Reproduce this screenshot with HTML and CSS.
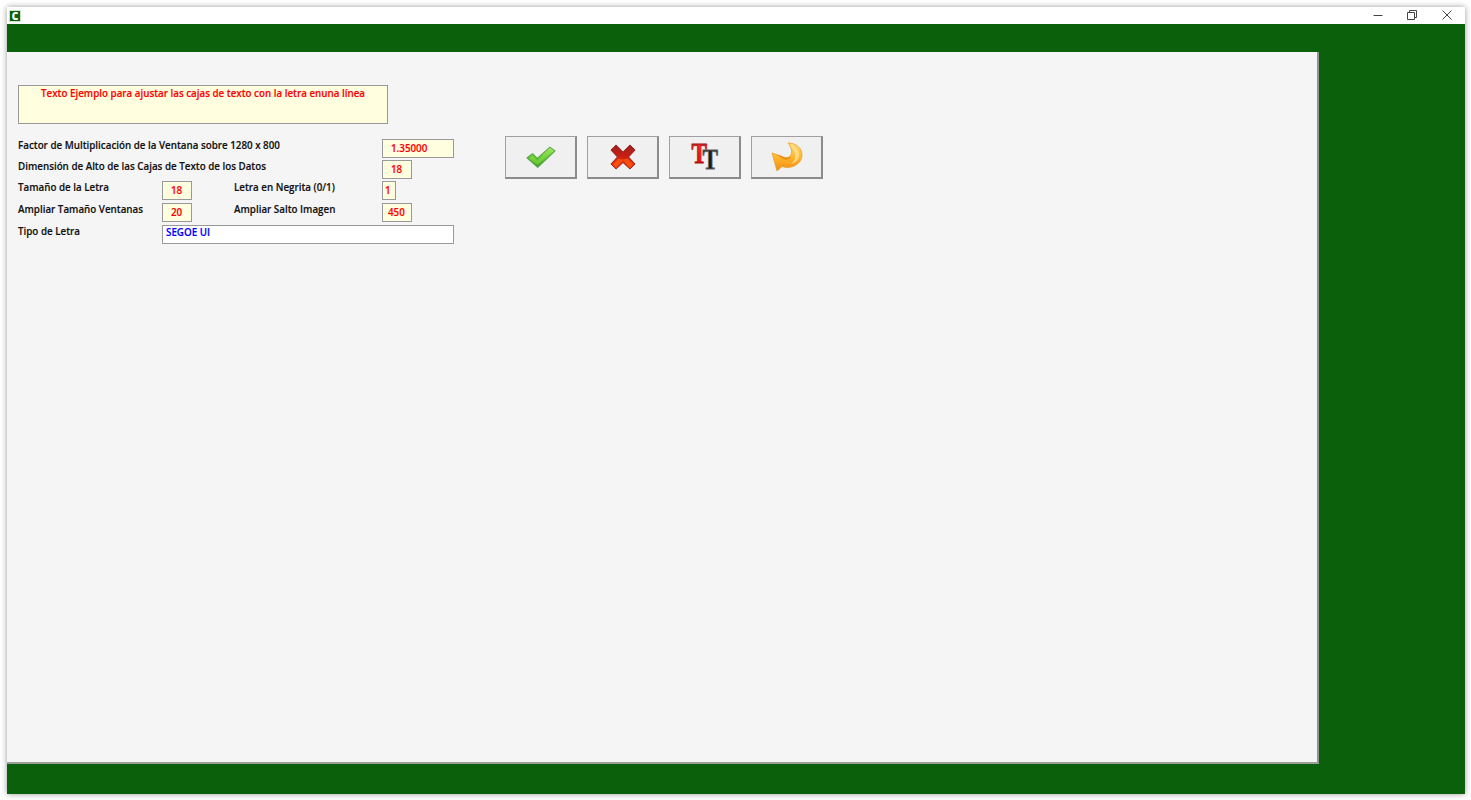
FILE: index.html
```html
<!DOCTYPE html>
<html lang="en">
<head>
    <meta charset="UTF-8">
    <title>Ajustes de Pantalla</title>
    <link rel="stylesheet" href="styles.css">
</head>
<body>
    <div class="window">
        <div class="titlebar">
            <span class="app-icon">C</span>
            <div class="controls">
                <span class="control">
                    <svg width="10" height="10" viewBox="0 0 10 10"><path d="M0.5 5.500h9" stroke="#444" fill="none"/></svg>
                </span>
                <span class="control">
                    <svg width="10" height="10" viewBox="0 0 10 10"><path d="M0.5 2.500h7v7h-7zM2.500 2.500v-2h7v7h-2" stroke="#444" fill="none"/></svg>
                </span>
                <span class="control">
                    <svg width="10" height="10" viewBox="0 0 10 10"><path d="M0.500 0.500l9 9M9.500 0.500l-9 9" stroke="#444" fill="none"/></svg>
                </span>
            </div>
        </div>
        <div class="green-top"></div>
        <div class="green-middle">
            <main class="panel">
                <div class="sample">Texto Ejemplo para ajustar las cajas de texto con la letra enuna línea</div>
                <div class="content">
                    <div class="form">
                        <div class="label wide">Factor de Multiplicación de la Ventana sobre 1280 x 800</div>
                        <div class="field col4 w72">1.35000</div>

                        <div class="label wide">Dimensión de Alto de las Cajas de Texto de los Datos</div>
                        <div class="field col4 w30">18</div>

                        <div class="label">Tamaño de la Letra</div>
                        <div class="field w30">18</div>
                        <div class="label">Letra en Negrita (0/1)</div>
                        <div class="field w14">1</div>

                        <div class="label">Ampliar Tamaño Ventanas</div>
                        <div class="field w30">20</div>
                        <div class="label">Ampliar Salto Imagen</div>
                        <div class="field w30 tight">450</div>

                        <div class="label">Tipo de Letra</div>
                        <div class="field font-name">SEGOE UI</div>
                    </div>
                    <div class="buttons">
                        <button class="btn">
                            <svg width="30" height="24" viewBox="0 0 32 24">
                                <defs>
                                    <linearGradient id="okGrad" x1="0" y1="0" x2="0" y2="1">
                                        <stop offset="0" stop-color="#b4ec6c"/>
                                        <stop offset="0.5" stop-color="#62c82e"/>
                                        <stop offset="1" stop-color="#2f9a1e"/>
                                    </linearGradient>
                                </defs>
                                <path d="M1 13L7 8.500l5 5L25.500 1.500 31 5.500 12.500 23z" fill="url(#okGrad)" stroke="#5aa84a" stroke-width="1.200" stroke-linejoin="round"/>
                                <path d="M3 13.500l4-2.800 5 5L26 3.500l2.500 2L12.500 20.500z" fill="#8fdc50" opacity="0.55"/>
                            </svg>
                        </button>
                        <button class="btn">
                            <svg width="26" height="28" viewBox="0 0 28 28">
                                <defs>
                                    <linearGradient id="noGrad" x1="0" y1="0" x2="0" y2="1">
                                        <stop offset="0" stop-color="#a02020"/>
                                        <stop offset="0.45" stop-color="#c81e14"/>
                                        <stop offset="1" stop-color="#ff4208"/>
                                    </linearGradient>
                                </defs>
                                <path d="M1 6.500L6.500 1 14 8.500 21.500 1 27 6.500 20 14l7 7.500L21.500 27 14 20l-7.500 7L1 21.500 8 14z" fill="url(#noGrad)" stroke="#8c1a1a" stroke-width="1" stroke-linejoin="round"/>
                                <path d="M3.500 22L9 15.500 14 17l5-1.500 5.500 6.500-3 3L14 17.500 6.500 25z" fill="#ff5a10" opacity="0.75"/>
                            </svg>
                        </button>
                        <button class="btn">
                            <svg width="40" height="40" viewBox="0 0 40 40">
                                <defs>
                                    <linearGradient id="redT" x1="0" y1="0" x2="0" y2="1">
                                        <stop offset="0" stop-color="#ff3030"/>
                                        <stop offset="1" stop-color="#d80a0a"/>
                                    </linearGradient>
                                </defs>
                                <text transform="translate(6.500 26) scale(0.8 1)" class="tt tt-red" fill="url(#redT)">T</text>
                                <text transform="translate(17.500 32) scale(0.8 1)" class="tt tt-black">T</text>
                            </svg>
                        </button>
                        <button class="btn">
                            <svg width="32" height="30" viewBox="0 0 32 30">
                                <defs>
                                    <linearGradient id="backGrad" x1="0" y1="0" x2="0" y2="1">
                                        <stop offset="0" stop-color="#ffdc70"/>
                                        <stop offset="0.55" stop-color="#fdb32b"/>
                                        <stop offset="1" stop-color="#f28c10"/>
                                    </linearGradient>
                                </defs>
                                <path d="M1 11L6 29l5-4.500C20 28 31 22 31 13 31 6 25 1 17 1c3 4 6 10 1 14-2 1.500-5 .5-8-1z" fill="url(#backGrad)" stroke="#e8a030" stroke-width="0.800" stroke-linejoin="round"/>
                                <path d="M19 3c5 1 9 5 9 10 0 5-4 8-8 9 3-3 5-5 4-10-.5-3-2.500-6-5-9z" fill="#ffe8a0" opacity="0.7"/>
                                <path d="M18 15c-2 1.500-5 .5-8-1l-5-1.500 8 5c3 1 6-.5 7-3z" fill="#e8850c" opacity="0.8"/>
                            </svg>
                        </button>
                    </div>
                </div>
            </main>
        </div>
        <div class="green-bottom"></div>
    </div>
</body>
</html>
```
FILE: styles.css
```css
html, body {
    height: 100%;
}
body {
    margin: 0;
    background-color: #ffffff;
    font-family: "Open Sans", "Noto Sans", sans-serif;
    font-weight: 600;
    font-size: 9.8px;
    -webkit-text-stroke: 0.15px currentColor;
    color: #111111;
    overflow: hidden;
}
.window {
    box-sizing: border-box;
    width: 1458px;
    height: 787px;
    margin: 7px 0 0 7px;
    display: flex;
    flex-direction: column;
    background-color: #0b610b;
    box-shadow: 0 0 6px rgba(0, 0, 0, 0.4);
}
.titlebar {
    height: 17px;
    flex: none;
    display: flex;
    align-items: center;
    justify-content: space-between;
    background-color: #ffffff;
}
.app-icon {
    width: 10px;
    height: 10px;
    margin-left: 2px;
    border: 1px solid #cfe0cf;
    background-color: #0b610b;
    color: #ffffff;
    font-size: 10px;
    font-weight: 800;
    line-height: 10px;
    text-align: center;
}
.controls {
    display: flex;
    margin-right: 1px;
    margin-bottom: 2px;
}
.control {
    width: 34.5px;
    display: flex;
    align-items: center;
    justify-content: center;
}
.green-top {
    height: 28px;
    flex: none;
}
.green-middle {
    height: 712px;
    flex: none;
}
.green-bottom {
    flex: 1;
}
.panel {
    box-sizing: border-box;
    width: 1312px;
    height: 100%;
    padding: 33px 0 0 11px;
    background-color: #f5f5f5;
    border-right: 2px solid #8f948f;
    border-bottom: 2px solid #9a9f9a;
}
.sample {
    box-sizing: border-box;
    width: 370px;
    height: 39px;
    padding-top: 1px;
    border: 1px solid #999999;
    background-color: #ffffe0;
    color: #ff0000;
    text-align: center;
}
.content {
    display: flex;
    gap: 51px;
    margin-top: 12px;
}
.form {
    display: grid;
    grid-template-columns: 144px 72px 148px 72px;
    grid-template-rows: 21px 21px 22px 22px 19px;
    padding-top: 3px;
}
.label {
    line-height: 14px;
}
.wide {
    grid-column: 1 / 4;
}
.field {
    box-sizing: border-box;
    height: 19px;
    padding-left: 8px;
    border: 1px solid #999999;
    background-color: #ffffe0;
    color: #ff0000;
    line-height: 17px;
}
.col4 {
    grid-column: 4;
}
.w72 {
    width: 72px;
}
.w30 {
    width: 30px;
}
.w14 {
    width: 14px;
    padding-left: 2px;
}
.tight {
    padding-left: 5px;
}
.font-name {
    grid-column: 2 / 5;
    padding-left: 3px;
    background-color: #ffffff;
    color: #0000ff;
    line-height: 14px;
}
.buttons {
    display: flex;
    gap: 10px;
    align-items: flex-start;
}
.btn {
    width: 72px;
    height: 43px;
    padding: 0;
    display: flex;
    align-items: center;
    justify-content: center;
    background-color: #f0f0f0;
    border: 1px solid #a0a0a0;
    border-right: 2px solid #8c8c8c;
    border-bottom: 2px solid #8c8c8c;
}
.tt {
    font-family: "Liberation Serif", serif;
    font-weight: 700;
    font-size: 29px;
}
.tt-red {
    stroke: #a01010;
    stroke-width: 0.8px;
}
.tt-black {
    fill: #1a1a1a;
    stroke: #666666;
    stroke-width: 0.8px;
}
```
